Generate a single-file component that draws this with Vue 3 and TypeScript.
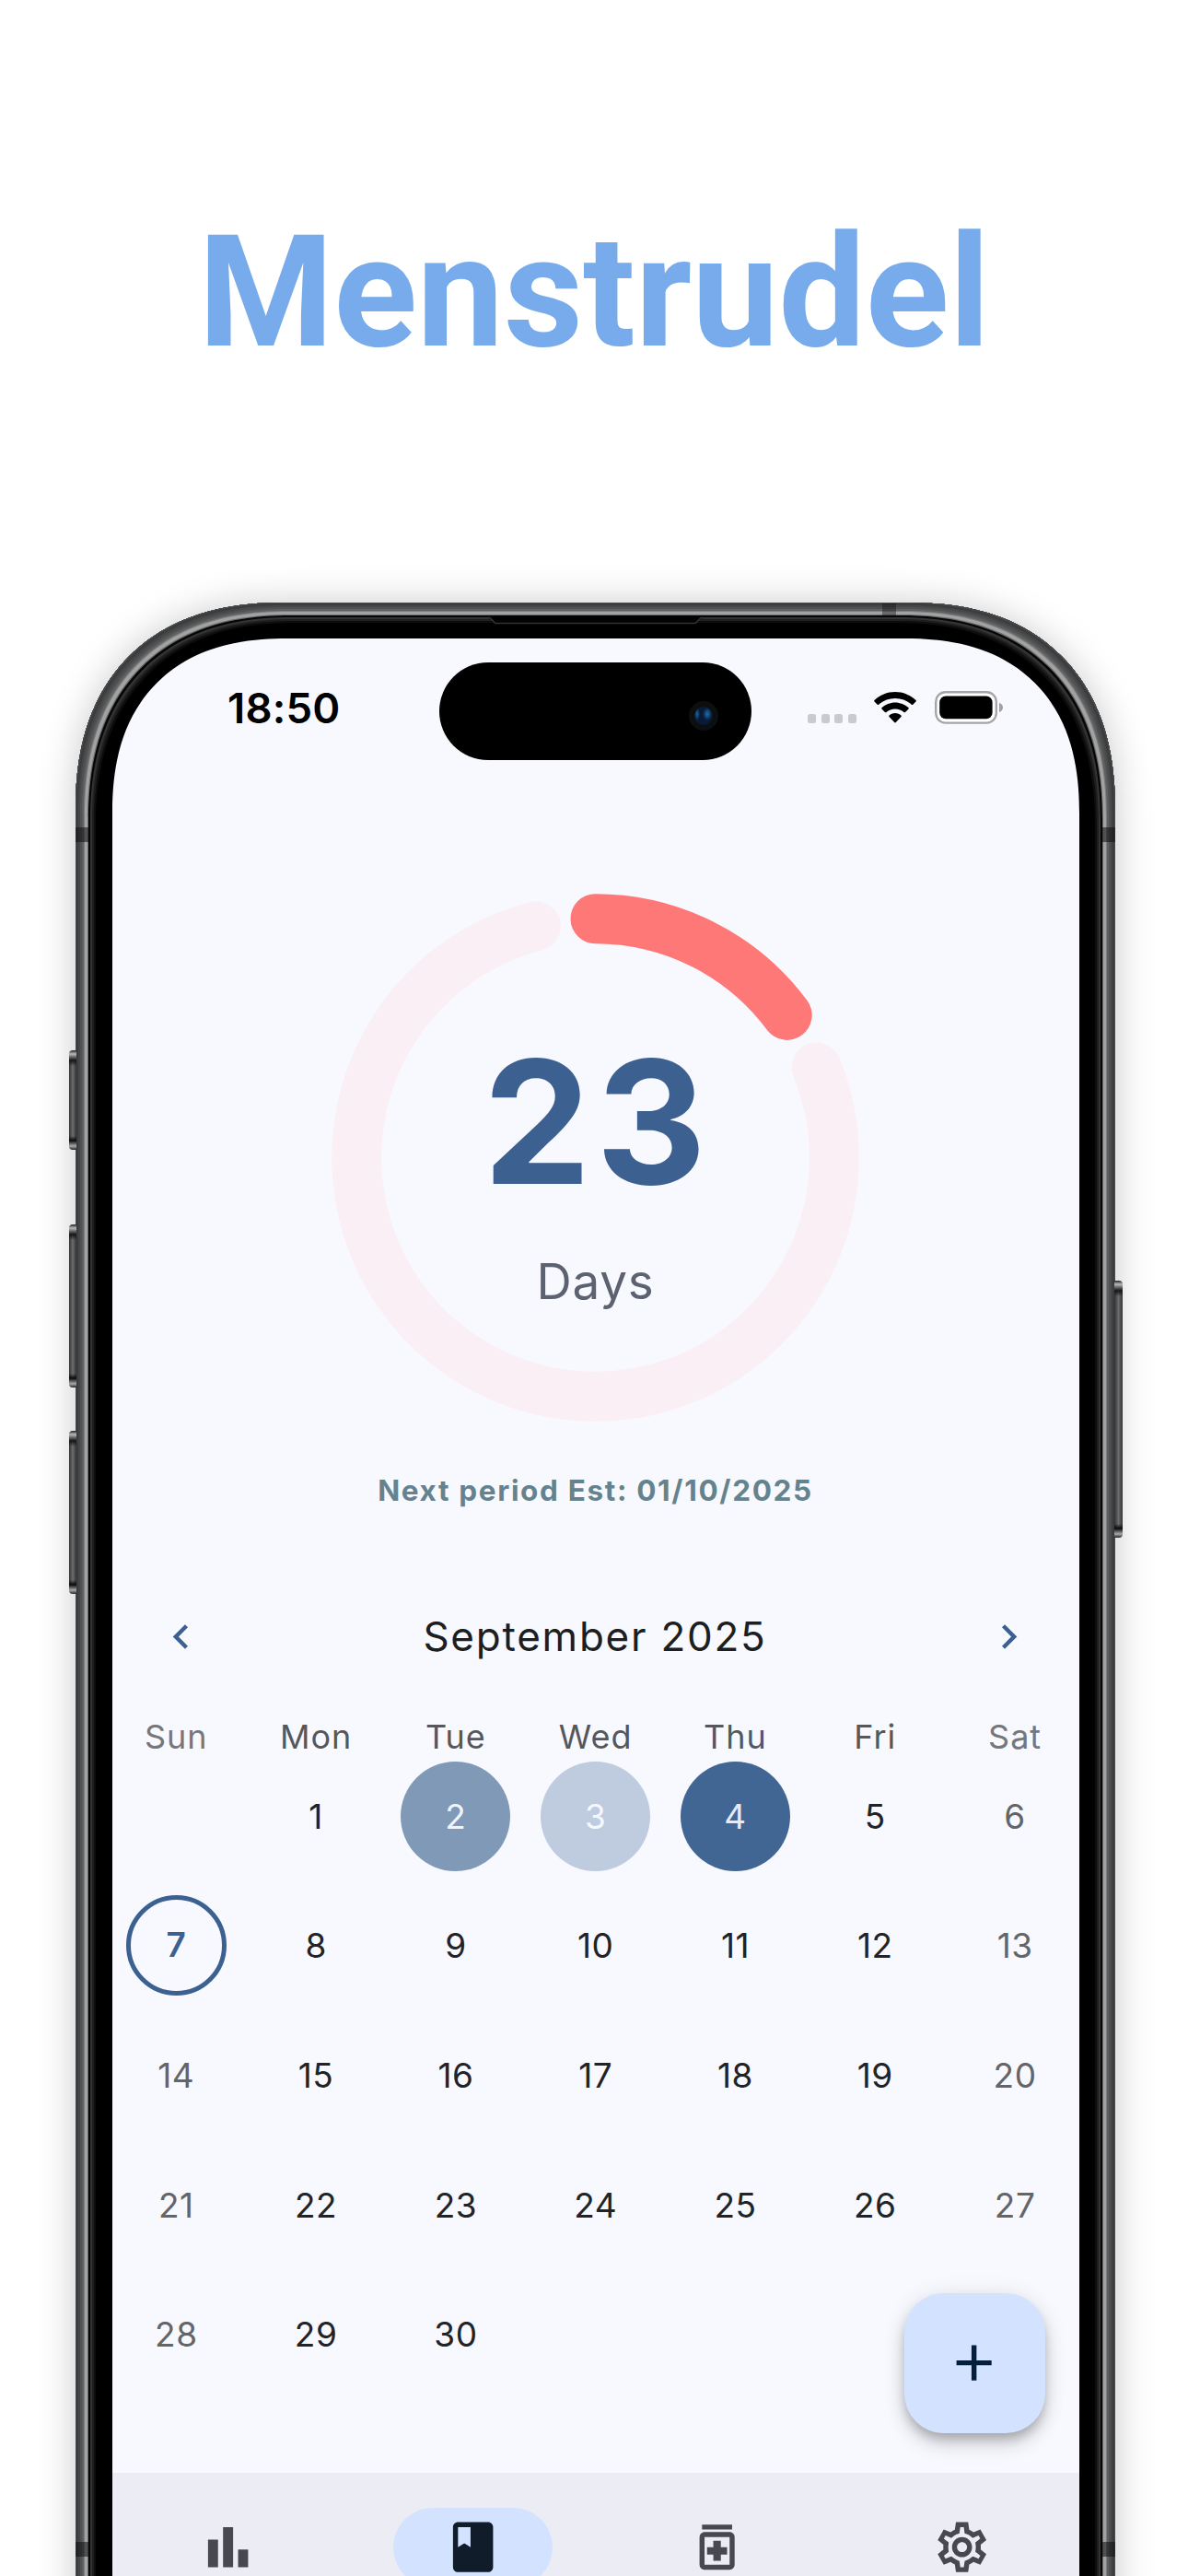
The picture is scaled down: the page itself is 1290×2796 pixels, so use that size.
<script setup lang="ts">
interface DayCell {
  day: number | null
  weekend: boolean
  flow?: 'light' | 'medium' | 'heavy'
  today?: boolean
}

const weekdays = ['Sun', 'Mon', 'Tue', 'Wed', 'Thu', 'Fri', 'Sat']

const flows: Record<number, DayCell['flow']> = { 2: 'medium', 3: 'light', 4: 'heavy' }

// September 2025 starts on a Monday, so one leading blank cell is needed.
const cells: DayCell[] = Array.from({ length: 35 }, (_, i) => {
  const day = i >= 1 && i <= 30 ? i : null
  const col = i % 7
  return {
    day,
    weekend: col === 0 || col === 6,
    flow: day ? flows[day] : undefined,
    today: day === 7,
  }
})

const RADIUS = 259.3
const CENTER = 286.5

function arc(from: number, to: number): string {
  const point = (deg: number) => {
    const a = (deg * Math.PI) / 180
    return `${(CENTER + RADIUS * Math.sin(a)).toFixed(2)} ${(CENTER - RADIUS * Math.cos(a)).toFixed(2)}`
  }
  const large = to - from > 180 ? 1 : 0
  return `M${point(from)}A${RADIUS} ${RADIUS} 0 ${large} 1 ${point(to)}`
}

const elapsedArc = arc(0, 53.4)
const remainingArc = arc(67.8, 345.6)

const tabs = [
  { id: 'stats', d: 'M4 9h4v11H4zM16 13h4v7h-4zM10 4h4v16h-4z' },
  {
    id: 'log',
    d: 'M18 2H6c-1.1 0-2 .9-2 2v16c0 1.1.9 2 2 2h12c1.1 0 2-.9 2-2V4c0-1.1-.9-2-2-2zM6 4h5v8l-2.500-1.500L6 12V4z',
  },
  {
    id: 'pills',
    d: 'M6 3h12v2H6zM17 6H7c-1.100 0-2 .9-2 2v11c0 1.100.9 2 2 2h10c1.100 0 2-.9 2-2V8c0-1.100-.9-2-2-2zm0 13H7V8h10v11zM10.500 17.500h3V15H16v-3h-2.500V9.500h-3V12H8v3h2.500z',
  },
  {
    id: 'settings',
    d: 'M19.430 12.980c.04-.32.07-.64.07-.98s-.03-.66-.07-.98L21.700 9.200l-2.400-4.200-2.740 1.050c-.52-.4-1.080-.73-1.690-.98L14.430 2H9.570l-.44 3.070c-.61.25-1.170.59-1.690.98L4.700 5 2.300 9.200l2.270 1.820c-.04.32-.07.65-.07.98s.03.66.07.98L2.300 14.800 4.700 19l2.740-1.050c.52.4 1.080.73 1.690.98L9.570 22h4.860l.44-3.070c.61-.25 1.170-.59 1.690-.98L19.300 19l2.400-4.200zm-1.980-1.710c.04.31.05.52.05.73s-.02.43-.05.73l-.14 1.130.89.7 1.080.84-.7 1.210-1.270-.51-1.040-.42-.9.68c-.43.32-.84.56-1.250.73l-1.060.43-.16 1.130-.2 1.350h-1.400l-.19-1.350-.16-1.130-1.060-.43c-.43-.18-.83-.41-1.230-.71l-.91-.7-1.060.43-1.270.51-.7-1.210 1.080-.84.89-.7-.14-1.130c-.03-.31-.05-.54-.05-.74s.02-.43.05-.73l.14-1.130-.89-.7-1.080-.84.7-1.210 1.270.51 1.040.42.9-.68c.43-.32.84-.56 1.250-.73l1.060-.43.16-1.130.2-1.350h1.390l.19 1.350.16 1.130 1.060.43c.43.18.83.41 1.230.71l.91.7 1.060-.43 1.270-.51.7 1.210-1.070.85-.89.7zM12 8c-2.210 0-4 1.790-4 4s1.790 4 4 4 4-1.790 4-4-1.790-4-4-4zm0 6c-1.100 0-2-.9-2-2s.9-2 2-2 2 .9 2 2-.9 2-2 2z',
  },
]
const activeTab = 'log'
</script>

<template>
  <div class="page">
    <header class="hero"><h1>Menstrudel</h1></header>

    <div class="phone">
      <i class="key k1" /><i class="key k2" /><i class="key k3" /><i class="key right" />
      <i class="band b1" /><i class="band b2" /><i class="band b3" /><i class="band b4" /><i class="band b5" />
      <svg class="speaker" width="232" height="12" viewBox="0 0 232 12">
        <path d="M0 0H232V2.500H229L223.500 8H8L2.500 2.500H0z" fill="#030303" />
        <path d="M0 1.500h1l6 6h217l6-6h2" fill="none" stroke="#333" stroke-width="1.500" />
      </svg>

      <div class="screen">
        <div class="status">
          <div class="time">18:50</div>
          <div class="island"><i class="lens" /></div>
          <div class="indicators">
            <div class="dots"><i v-for="n in 4" :key="n" /></div>
            <svg class="wifi" width="46" height="34" viewBox="0 0 46 34">
              <path d="M23 0C14.300 0 6.400 3.400.5 8.900c-.5.5-.5 1.100 0 1.600l3.200 3.200c.4.4 1 .4 1.500 0C9.900 9.500 16.100 7 23 7s13.100 2.500 17.800 6.700c.5.4 1.100.4 1.500 0l3.200-3.200c.5-.5.5-1.100 0-1.600C39.600 3.400 31.700 0 23 0z" />
              <path d="M23 11.500c-5.500 0-10.600 2.100-14.400 5.600-.5.5-.5 1.100 0 1.600l3.400 3.300c.4.4 1 .4 1.500 0 2.500-2.300 5.800-3.600 9.500-3.600s7 1.300 9.500 3.600c.5.4 1.100.4 1.500 0l3.400-3.300c.5-.5.5-1.100 0-1.600-3.800-3.500-8.900-5.600-14.400-5.600z" />
              <path d="M23 23c-2.500 0-4.800 1-6.500 2.500-.5.5-.5 1.100 0 1.600l5.700 5.900c.5.5 1.100.5 1.600 0l5.700-5.900c.5-.5.5-1.100 0-1.600C27.800 24 25.500 23 23 23z" />
            </svg>
            <svg class="battery" width="75" height="36" viewBox="0 0 75 36">
              <rect x="1.200" y="1.200" width="65.600" height="33.400" rx="10.500" fill="#fff" stroke="#a5a5a9" stroke-width="2.400" />
              <rect x="5.200" y="5.500" width="57.400" height="24.800" rx="6.800" />
              <path d="M70 12.800c2.500 1 4 2.900 4 5.100s-1.500 4.100-4 5.100z" fill="#a0a0a5" />
            </svg>
          </div>
        </div>

        <section class="cycle">
          <svg class="ring" width="573" height="573" viewBox="0 0 573 573">
            <path :d="remainingArc" stroke="#faeff4" />
            <path :d="elapsedArc" stroke="#ff7878" />
          </svg>
          <div class="count">
            <div class="number">23</div>
            <div class="unit">Days</div>
          </div>
        </section>
        <p class="estimate">Next period Est: 01/10/2025</p>

        <div class="month">
          <svg width="53" height="53" viewBox="0 0 24 24"><path d="M15.410 7.410 14 6l-6 6 6 6 1.410-1.410L10.830 12z" /></svg>
          <h2>September 2025</h2>
          <svg width="53" height="53" viewBox="0 0 24 24"><path d="M10 6 8.590 7.410 13.170 12l-4.580 4.590L10 18l6-6z" /></svg>
        </div>

        <div class="grid weekdays">
          <span v-for="(name, i) in weekdays" :key="name" :class="{ weekend: i === 0 || i === 6 }">{{ name }}</span>
        </div>
        <div class="grid days">
          <div v-for="(cell, i) in cells" :key="i" class="cell">
            <span v-if="cell.day" class="day" :class="[cell.flow, { weekend: cell.weekend, today: cell.today }]">{{ cell.day }}</span>
          </div>
        </div>

        <nav class="tabs">
          <div v-for="tab in tabs" :key="tab.id" class="tab" :class="{ active: tab.id === activeTab }">
            <svg width="65.300" height="65.300" viewBox="0 0 24 24"><path :d="tab.d" fill-rule="evenodd" /></svg>
          </div>
        </nav>

        <button class="fab" aria-label="Add">
          <svg width="65.300" height="65.300" viewBox="0 0 24 24"><path d="M19 13h-6v6h-2v-6H5v-2h6V5h2v6h6z" /></svg>
        </button>
      </div>
    </div>
  </div>
</template>

<style>
html,
body {
  margin: 0;
  background: #fff;
}
</style>

<style scoped>
.page {
  width: 1290px;
  height: 2796px;
  overflow: hidden;
  background: #fff;
  font-family: Inter, "Liberation Sans", sans-serif;
}
.hero {
  height: 654px;
  display: flex;
  justify-content: center;
}
.hero h1 {
  margin: 218px 0 0;
  height: 200px;
  font: 700 168px/200px Roboto, sans-serif;
  letter-spacing: -0.100px;
  color: #77abeb;
  white-space: nowrap;
}
.phone {
  position: relative;
  box-sizing: border-box;
  width: 1129px;
  height: 2400px;
  margin-left: 82px;
  padding: 39px 39px 0 40px;
  border-radius: 205px;
  background: #000;
  box-shadow:
    inset 0 0 0 1px #4a4b4c,
    inset 0 0 0 3px #3b3c3d,
    inset 0 0 0 5px #464748,
    inset 0 0 0 7px #505152,
    inset 0 0 0 9px #5f6061,
    inset 0 0 0 10px #7c7d7d,
    inset 0 0 0 13px #a2a2a3,
    inset 0 0 0 14px #6a6a6a,
    inset 0 0 0 16px #060606,
    inset 0 0 0 18px #333,
    inset 0 0 0 20px #1e1e1e,
    inset 0 0 0 22px #0d0d0d,
    0 2px 42px rgba(0, 0, 0, 0.22);
}
.key {
  position: absolute;
  left: -7.500px;
  width: 8.500px;
  border-radius: 4px 0 0 4px;
  background:
    linear-gradient(180deg, #222 0, #bbb 4px, #555 8px, #161616 11px, transparent 17px, transparent calc(100% - 15px), #0a0a0a calc(100% - 10px), #aaa calc(100% - 4px), #222 100%),
    linear-gradient(90deg, #303131, #6c6d6d 50%, #333);
}
.k1 { top: 486px; height: 108px; }
.k2 { top: 675px; height: 177px; }
.k3 { top: 899px; height: 177px; }
.key.right {
  left: 1128px;
  top: 736px;
  height: 279px;
  border-radius: 0 4px 4px 0;
}
.band {
  position: absolute;
  width: 14px;
  height: 16px;
  background: rgba(14, 14, 16, 0.55);
}
.b1 { left: 0; top: 244px; }
.b2 { right: 0; top: 244px; }
.b3 { left: 876px; top: 1px; width: 15px; height: 13px; opacity: 0.7; }
.b4 { left: 0; top: 2105px; }
.b5 { right: 0; top: 2105px; }
.speaker {
  position: absolute;
  left: 449px;
  top: 15px;
}
.screen {
  position: relative;
  height: 2200px;
  border-radius: 169px 169px 0 0;
  background: #f8f9ff;
  overflow: hidden;
}
@supports (corner-shape: superellipse(1.2)) {
  .phone {
    border-radius: 225px;
    corner-shape: superellipse(1.21);
  }
  .screen {
    border-radius: 190px 190px 0 0;
    corner-shape: superellipse(1.24);
  }
}
.status {
  display: flex;
  padding: 25.500px 84px 0 125px;
  height: 106px;
}
.time {
  flex: none;
  width: 230px;
  font-size: 45.500px;
  font-weight: 600;
  line-height: 100px;
  letter-spacing: 0.200px;
  color: #000;
}
.island {
  flex: none;
  width: 339px;
  height: 106px;
  border-radius: 53px;
  background: #000;
  display: flex;
  justify-content: flex-end;
}
.lens {
  width: 20px;
  height: 20px;
  margin: 42px 36px 0 0;
  border: 6px solid #0d0e0f;
  border-radius: 50%;
  background:
    radial-gradient(ellipse 3px 7px at 3px 8px, #1c6799, transparent),
    radial-gradient(ellipse 5px 7px at 14px 8px, #2170ab, transparent),
    #071a38;
}
.indicators {
  width: 212px;
  margin-left: auto;
  display: flex;
  align-items: flex-start;
  padding-top: 31px;
}
.dots {
  display: flex;
  gap: 5.500px;
  margin: 25.500px 20px 0 1px;
}
.dots i {
  width: 9px;
  height: 9.500px;
  border-radius: 2.500px;
  background: #c9cacf;
}
.wifi {
  margin: 1.500px 20px 0 -0.500px;
}
.indicators svg {
  flex: none;
}
.cycle {
  display: grid;
  justify-content: center;
  margin: 145px 2px 0 0;
  height: 573px;
}
.ring,
.count {
  grid-area: 1 / 1;
}
.ring path {
  fill: none;
  stroke-width: 54px;
  stroke-linecap: round;
}
.count {
  padding-top: 155.500px;
  text-align: center;
}
.number {
  padding-left: 5px;
  font-size: 186px;
  font-weight: 700;
  line-height: 186px;
  letter-spacing: 5.500px;
  color: #3c6090;
}
.unit {
  margin-top: 50px;
  padding-left: 1px;
  font-size: 53px;
  line-height: 60px;
  letter-spacing: 0.700px;
  color: #5c6270;
}
.estimate {
  margin: 55.500px 1px 0 0;
  text-align: center;
  font-size: 31.500px;
  font-weight: 700;
  line-height: 40px;
  letter-spacing: 1.650px;
  color: #65838f;
}
.month {
  display: flex;
  align-items: center;
  justify-content: space-between;
  height: 80px;
  margin: 98px 50px 54px 48px;
}
.month svg {
  fill: #3c6191;
}
.month h2 {
  margin: 0;
  font-size: 44px;
  font-weight: 400;
  line-height: 80px;
  letter-spacing: 1.750px;
  color: #1c1e22;
}
.grid {
  display: grid;
  grid-template-columns: repeat(7, 151.800px);
  justify-content: center;
  margin: 0 -19.700px 0 -20.300px;
}
.weekdays span {
  font-size: 36px;
  line-height: 31px;
  letter-spacing: 1px;
  text-align: center;
  color: #55575b;
}
.weekdays .weekend {
  color: #74777b;
}
.days {
  grid-auto-rows: 140.600px;
}
.cell {
  display: grid;
  place-items: center;
}
.day {
  box-sizing: border-box;
  width: 119px;
  height: 119px;
  border-radius: 50%;
  text-align: center;
  font-size: 37px;
  line-height: 119px;
  letter-spacing: 0.500px;
  color: #212327;
}
.day.weekend { color: #636569; }
.day.medium { background: #8099b7; color: #eef5ff; }
.day.light { background: #bfcbde; color: #f3f8ff; }
.day.heavy { background: #426693; color: #e2ebf7; }
.day.today {
  width: 109px;
  height: 109px;
  border: 5.500px solid #3c6191;
  line-height: 98px;
  font-weight: 600;
  color: #3c6191;
}
.tabs {
  display: grid;
  grid-template-columns: repeat(4, 265.600px);
  justify-content: center;
  align-items: start;
  margin: 80px -19px 0 -21px;
  padding-top: 38px;
  height: 200px;
  background: #ebecf4;
}
.tab {
  display: flex;
  align-items: center;
  justify-content: center;
  justify-self: center;
  width: 173px;
  height: 86px;
  border-radius: 43px;
  fill: #47494e;
}
.tab.active {
  background: #d3e3ff;
  fill: #101c2a;
}
.fab {
  position: absolute;
  left: 859.500px;
  top: 1796px;
  width: 153px;
  height: 152px;
  padding: 0;
  border: 0;
  border-radius: 43px;
  display: grid;
  place-items: center;
  background: #d3e3ff;
  fill: #051e3c;
  box-shadow:
    0 8px 12px -2px rgba(0, 0, 0, 0.22),
    0 14px 22px rgba(0, 0, 0, 0.11),
    0 2px 26px rgba(0, 0, 0, 0.09);
}
</style>
